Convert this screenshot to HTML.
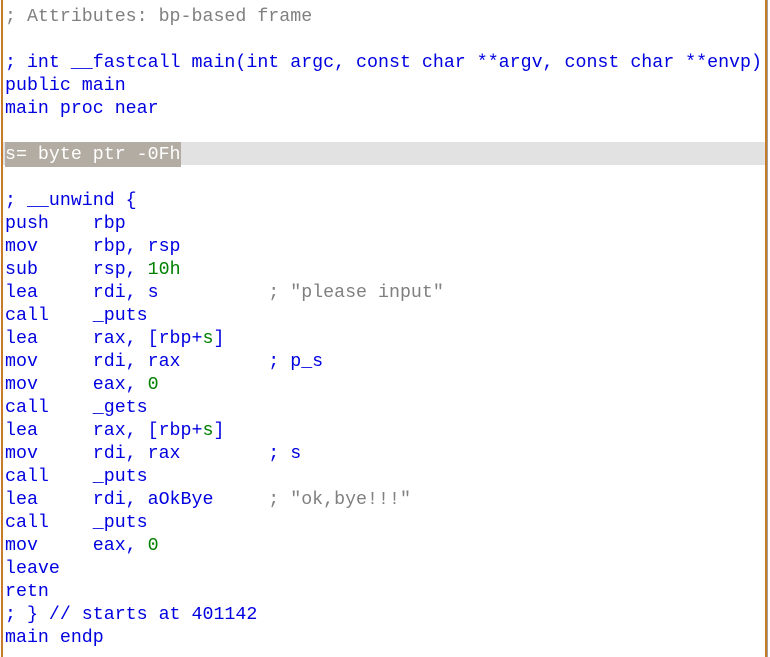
<!DOCTYPE html>
<html><head><style>
html,body{margin:0;padding:0;background:#fff;}
body{width:770px;height:657px;position:relative;overflow:hidden;}
.bl{position:absolute;left:1px;top:0;width:2px;height:657px;background:#c87a28;}
.br{position:absolute;left:765px;top:0;width:2px;height:657px;background:#c87a28;}
.br2{position:absolute;left:767px;top:0;width:1px;height:657px;background:#a0a0a0;}
pre{position:absolute;left:5px;top:6px;margin:0;font-family:"Liberation Mono",monospace;font-size:18.3px;line-height:23px;color:#0000e0;}
.c{color:#808080}.g{color:#008000}
.hl{position:absolute;left:3px;top:142px;width:762px;height:23px;background:#e2e2e2;}
.sel{background:#b2aca2;color:#fff;display:inline-block;height:23px;vertical-align:top;}
</style></head><body>
<div class="hl"></div>
<div class="bl"></div><div class="br"></div><div class="br2"></div>
<pre><span class="c">; Attributes: bp-based frame</span>

; int __fastcall main(int argc, const char **argv, const char **envp)
public main
main proc near

<span class="sel" style="margin-top:-2px;padding-top:2px;height:23px">s= byte ptr -0Fh</span>

; __unwind {
push    rbp
mov     rbp, rsp
sub     rsp, <span class="g">10h</span>
lea     rdi, s          <span class="c">; "please input"</span>
call    _puts
lea     rax, [rbp+<span class="g">s</span>]
mov     rdi, rax        ; p_s
mov     eax, <span class="g">0</span>
call    _gets
lea     rax, [rbp+<span class="g">s</span>]
mov     rdi, rax        ; s
call    _puts
lea     rdi, aOkBye     <span class="c">; "ok,bye!!!"</span>
call    _puts
mov     eax, <span class="g">0</span>
leave
retn
; } // starts at 401142
main endp</pre>
</body></html>
